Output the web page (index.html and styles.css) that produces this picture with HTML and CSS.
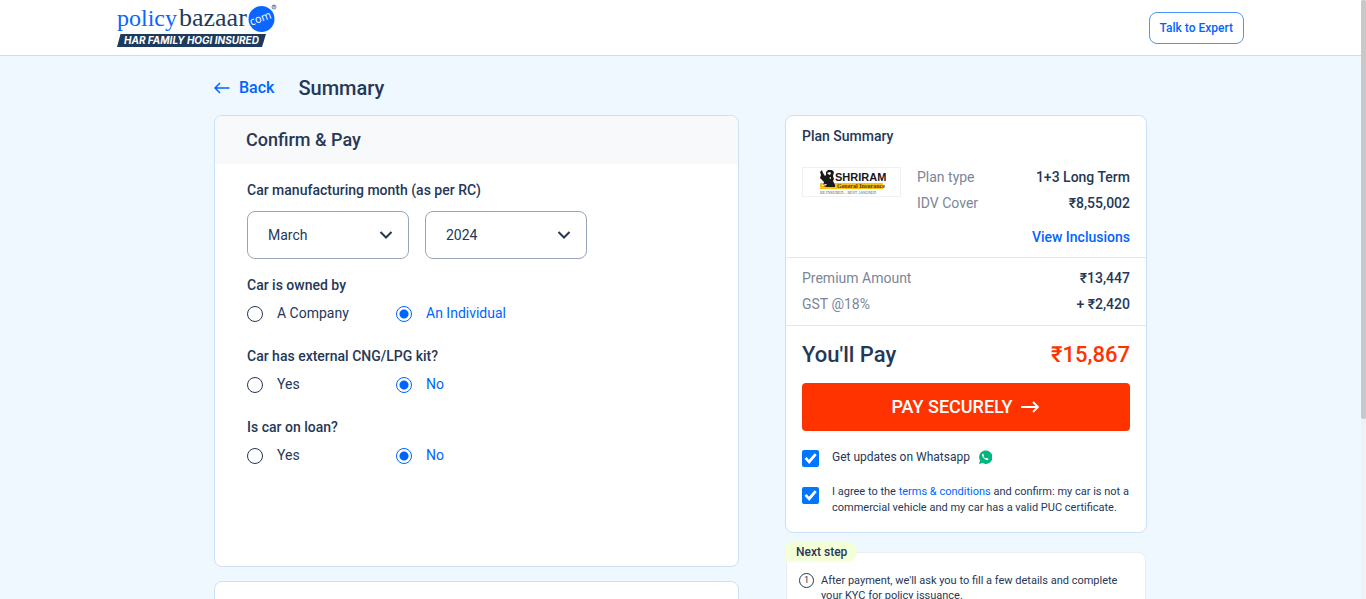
FILE: index.html
```html
<!DOCTYPE html>
<html lang="en">
<head>
<meta charset="utf-8">
<meta name="viewport" content="width=device-width, initial-scale=1">
<title>Summary - Policybazaar</title>
<link rel="stylesheet" href="styles.css">
</head>
<body>
<div class="page">
  <header class="topbar">
    <div class="topbar-inner">
      <a class="brand" href="#" aria-label="Policybazaar home">
        <svg width="162" height="46" viewBox="0 0 162 46" role="img" aria-label="policybazaar.com">
          <text class="brand-policy" x="0" y="24">policy</text>
          <text class="brand-bazaar" x="62" y="24">bazaar</text>
          <circle cx="144.500" cy="17" r="13" fill="#0a66ff"/>
          <text class="brand-com" x="144" y="20" transform="rotate(-20 144 18)">com</text>
          <circle cx="157" cy="5" r="2" fill="none" stroke="#253858" stroke-width=".6"/>
          <text class="brand-reg" x="157" y="6">R</text>
          <path d="M3.500 32H149l-4 13H0z" fill="#1d3a5c"/>
          <text class="brand-tag" x="7" y="42">HAR FAMILY HOGI INSURED</text>
        </svg>
      </a>
      <button class="expert" type="button">Talk to Expert</button>
    </div>
  </header>

  <main class="content">
    <div class="heading">
      <a class="back" href="#">
        <svg width="16" height="12" viewBox="0 0 16 12" aria-hidden="true"><path d="M15.500 6H1M6 1 1 6l5 5" fill="none" stroke="currentColor" stroke-width="1.500"/></svg>
        Back
      </a>
      <h1>Summary</h1>
    </div>

    <div class="columns">
      <div class="left">
        <section class="card">
          <h2 class="card-head">Confirm &amp; Pay</h2>
          <form class="form">
            <fieldset>
              <legend>Car manufacturing month (as per RC)</legend>
              <div class="selects">
                <div class="select">
                  <select aria-label="Month"><option>March</option></select>
                  <svg width="14" height="10" viewBox="0 0 14 10" aria-hidden="true"><path d="m1.500 2 5.500 5.500L12.500 2" fill="none" stroke="#253858" stroke-width="2"/></svg>
                </div>
                <div class="select">
                  <select aria-label="Year"><option>2024</option></select>
                  <svg width="14" height="10" viewBox="0 0 14 10" aria-hidden="true"><path d="m1.500 2 5.500 5.500L12.500 2" fill="none" stroke="#253858" stroke-width="2"/></svg>
                </div>
              </div>
            </fieldset>
            <fieldset>
              <legend>Car is owned by</legend>
              <div class="options">
                <label><input type="radio" name="owner"><span>A Company</span></label>
                <label><input type="radio" name="owner" checked><span>An Individual</span></label>
              </div>
            </fieldset>
            <fieldset>
              <legend>Car has external CNG/LPG kit?</legend>
              <div class="options">
                <label><input type="radio" name="kit"><span>Yes</span></label>
                <label><input type="radio" name="kit" checked><span>No</span></label>
              </div>
            </fieldset>
            <fieldset>
              <legend>Is car on loan?</legend>
              <div class="options">
                <label><input type="radio" name="loan"><span>Yes</span></label>
                <label><input type="radio" name="loan" checked><span>No</span></label>
              </div>
            </fieldset>
          </form>
        </section>
        <section class="card card-next"></section>
      </div>

      <aside class="right">
        <section class="card plan">
          <div class="plan-top">
            <h2>Plan Summary</h2>
            <div class="insurer">
              <div class="insurer-logo">
                <svg width="68" height="28" viewBox="0 0 68 28" role="img" aria-label="Shriram General Insurance">
                  <path d="M2 15h63v6H2z" fill="#fdc010"/>
                  <path d="M2 4l2-2 1 3 2 3 1-1V4l2-2h4l2 2-1 4 1 3-1 2 2 4 0 2H9l-4-1 1-4-4-4 1-3z" fill="#191919"/>
                  <path d="M9 5l3-1 1 1-1 2-2-1zM4 17l4-1 1 1-4 1zM11 10l2-1v2z" fill="#fff"/>
                  <text class="ins-name" x="17" y="13">SHRIRAM</text>
                  <text class="ins-kind" x="19" y="20">General Insurance</text>
                  <text class="ins-motto" x="2" y="26">BE INSURED... REST ASSURED</text>
                </svg>
              </div>
              <dl class="rows">
                <div><dt>Plan type</dt><dd>1+3 Long Term</dd></div>
                <div><dt>IDV Cover</dt><dd>₹8,55,002</dd></div>
              </dl>
            </div>
            <a class="inclusions" href="#">View Inclusions</a>
          </div>
          <dl class="rows amounts">
            <div><dt>Premium Amount</dt><dd>₹13,447</dd></div>
            <div><dt>GST @18%</dt><dd>+ ₹2,420</dd></div>
          </dl>
          <div class="pay">
            <div class="total"><span>You'll Pay</span><strong>₹15,867</strong></div>
            <button class="pay-button" type="button">PAY SECURELY
              <svg width="20" height="12" viewBox="0 0 20 12" aria-hidden="true"><path d="M0 6h17M12 1l5 5-5 5" fill="none" stroke="currentColor" stroke-width="1.800"/></svg>
            </button>
            <label class="check">
              <input type="checkbox" checked>
              <span class="updates">Get updates on Whatsapp
                <svg width="14" height="14" viewBox="0 0 14 14" aria-hidden="true"><path d="M1 14 2 10.500A6.700 6.700 0 1 1 4.500 13z" fill="#00b77f"/><path d="M5 3.500c-1 .4-1.200 1.600-.7 2.700a7 7 0 0 0 3.700 3.700c1.300.5 2.300.1 2.600-1l-1.900-1.100-.8.8C7 8.200 6 7.400 5.500 6.400l.6-.8z" fill="#fff"/></svg>
              </span>
            </label>
            <label class="check">
              <input type="checkbox" checked>
              <span class="terms">I agree to the <a href="#">terms &amp; conditions</a> and confirm: my car is not a commercial vehicle and my car has a valid PUC certificate.</span>
            </label>
          </div>
        </section>
        <section class="steps">
          <h3>Next step</h3>
          <div class="step">
            <span class="step-number">1</span>
            <p>After payment, we'll ask you to fill a few details and complete your KYC for policy issuance.</p>
          </div>
        </section>
      </aside>
    </div>
  </main>
</div>
<div class="scrollbar" aria-hidden="true"><div class="scrollbar-thumb"></div></div>
</body>
</html>
```
FILE: styles.css
```css
* { box-sizing: border-box; }
body, h1, h2, h3, p, dl, dd, fieldset { margin: 0; }
body {
  font-family: Roboto, "Noto Sans", sans-serif;
  font-size: 14px;
  line-height: 20px;
  color: #253858;
}
a { color: #0065ff; text-decoration: none; }
button, select { font-family: inherit; }

.page { height: 100vh; margin-right: 5px; overflow-y: auto; scrollbar-width: none; background: #eff7ff; }
.scrollbar { position: fixed; top: 0; right: 0; width: 5px; height: 100%; background: #f1f1f1; }
.scrollbar-thumb { height: 70%; background: #c8c8c8; border-radius: 2px; }

.topbar { background: #fff; border-bottom: 1px solid #d1dae6; }
.topbar-inner {
  max-width: 1127px;
  height: 55px;
  margin: 0 auto;
  display: flex;
  align-items: center;
  justify-content: space-between;
}
.brand { display: flex; align-self: flex-start; padding-top: 2px; }
.brand-policy { font: 24px "Liberation Serif", serif; fill: #0a66ff; }
.brand-bazaar { font: 26px "Liberation Serif", serif; fill: #1d3a5c; }
.brand-com { font: 11px "Open Sans", sans-serif; fill: #fff; text-anchor: middle; }
.brand-reg { font: 3px Roboto, sans-serif; fill: #253858; text-anchor: middle; }
.brand-tag { font: italic 700 10px Inter, sans-serif; fill: #fff; }
.expert {
  height: 32px;
  padding: 0 10px;
  border: 1px solid #4c94ff;
  border-radius: 8px;
  background: #fff;
  color: #0065ff;
  font-size: 12px;
  font-weight: 500;
}

.content { max-width: 933px; margin: 0 auto; padding: 20px 0 16px; }
.heading { display: flex; align-items: center; gap: 24px; height: 24px; margin-bottom: 15px; }
.heading h1 { font-size: 20px; font-weight: 500; }
.back { display: flex; align-items: center; gap: 9px; font-size: 16px; font-weight: 500; line-height: 22px; }

.columns { display: grid; grid-template-columns: minmax(0, 525fr) minmax(0, 362fr); gap: 46px; align-items: start; }
.left { display: grid; gap: 14px; }
.card { background: #fff; border: 1px solid #cce0f8; border-radius: 8px; overflow: hidden; }
.card-next { min-height: 260px; }
.card-head { padding: 14px 31px; background: #f8f9fb; font-size: 18px; font-weight: 500; }
.form { display: grid; gap: 23px; padding: 16px 32px 101px; }
.form fieldset { min-width: 0; padding: 0; border: 0; }
.form fieldset:first-child { margin-bottom: -7px; }
.form legend { padding: 0; margin-bottom: 8px; font-weight: 500; }
.selects { display: grid; grid-template-columns: repeat(2, 162px); gap: 16px; padding-top: 3px; }
.select { display: grid; align-items: center; }
.select > * { grid-area: 1 / 1; }
.select svg { justify-self: end; margin-right: 16px; pointer-events: none; }
.select select {
  appearance: none;
  width: 100%;
  height: 48px;
  padding: 0 20px;
  border: 1px solid #97a5b8;
  border-radius: 8px;
  background: #fff;
  color: #253858;
  font-size: 14px;
}
.options { display: flex; }
.options label { display: flex; align-items: center; gap: 14px; width: 149px; }
.options input {
  appearance: none;
  width: 16px;
  height: 16px;
  margin: 2px 0 0;
  border: 1px solid #253858;
  border-radius: 50%;
}
.options input:checked { border-color: #0065ff; background: radial-gradient(circle, #0065ff 4px, #fff 5px); }
.options input:checked + span { color: #0065ff; }

.plan h2 { font-size: 14px; font-weight: 500; margin-bottom: 18px; }
.plan-top { display: grid; padding: 10px 16px; border-bottom: 1px solid #e5e8ec; }
.insurer { display: grid; grid-template-columns: 99px 1fr; gap: 16px; align-items: start; }
.insurer-logo { display: flex; justify-content: center; height: 30px; margin-top: 3px; border: 1px solid #f0f0f0; }
.ins-name { font: 700 11px "Liberation Sans", sans-serif; fill: #191919; }
.ins-kind { font: 700 6px "Liberation Serif", serif; fill: #4a3a08; }
.ins-motto { font: 4px "Liberation Serif", serif; fill: #555; }
.rows > div { display: flex; justify-content: space-between; line-height: 26px; }
.rows dt { color: #7a8699; }
.rows dd { font-weight: 500; }
.inclusions { justify-self: end; margin-top: 11px; font-weight: 500; }
.amounts { padding: 7px 16px 8px; border-bottom: 1px solid #e5e8ec; }
.pay { padding: 16px; }
.total { display: flex; justify-content: space-between; font-size: 22px; line-height: 26px; font-weight: 500; }
.total strong { color: #ff3300; font-weight: 500; }
.pay-button {
  display: flex;
  align-items: center;
  justify-content: center;
  gap: 8px;
  width: 100%;
  height: 48px;
  margin: 15px 0 16px;
  border: 0;
  border-radius: 4px;
  background: #ff3300;
  color: #fff;
  font-size: 18px;
  font-weight: 500;
  line-height: 20px;
}
.check { display: grid; grid-template-columns: 17px 1fr; gap: 13px; align-items: start; }
.check + .check { margin-top: 17px; }
.check input {
  appearance: none;
  display: grid;
  place-items: center;
  width: 17px;
  height: 17px;
  margin: 3px 0 0;
  border-radius: 2px;
  background: #0075ff;
}
.check input:checked::before {
  content: "";
  width: 13px;
  height: 12px;
  background: #fff;
  clip-path: polygon(4% 52%, 20% 38%, 38% 60%, 82% 6%, 98% 20%, 40% 96%);
}
.updates { display: flex; align-items: center; gap: 8px; font-size: 12px; line-height: 20px; }
.terms { font-size: 11px; line-height: 16px; }

.steps { margin: 19px 1px 0; padding-bottom: 16px; background: #fff; border: 1px solid #eaedf1; border-radius: 8px; }
.steps h3 {
  width: fit-content;
  margin: -11px 0 0 -1px;
  padding: 0 10px;
  border-radius: 4px 10px 10px 0;
  background: #f3ffd6;
  font-size: 12px;
  font-weight: 500;
}
.step { display: grid; grid-template-columns: 15px 1fr; gap: 7px; padding: 11px 12px 0; font-size: 11px; line-height: 15px; }
.step-number { height: 15px; border: 1px solid #253858; border-radius: 50%; text-align: center; font-size: 9px; line-height: 13px; }
```
